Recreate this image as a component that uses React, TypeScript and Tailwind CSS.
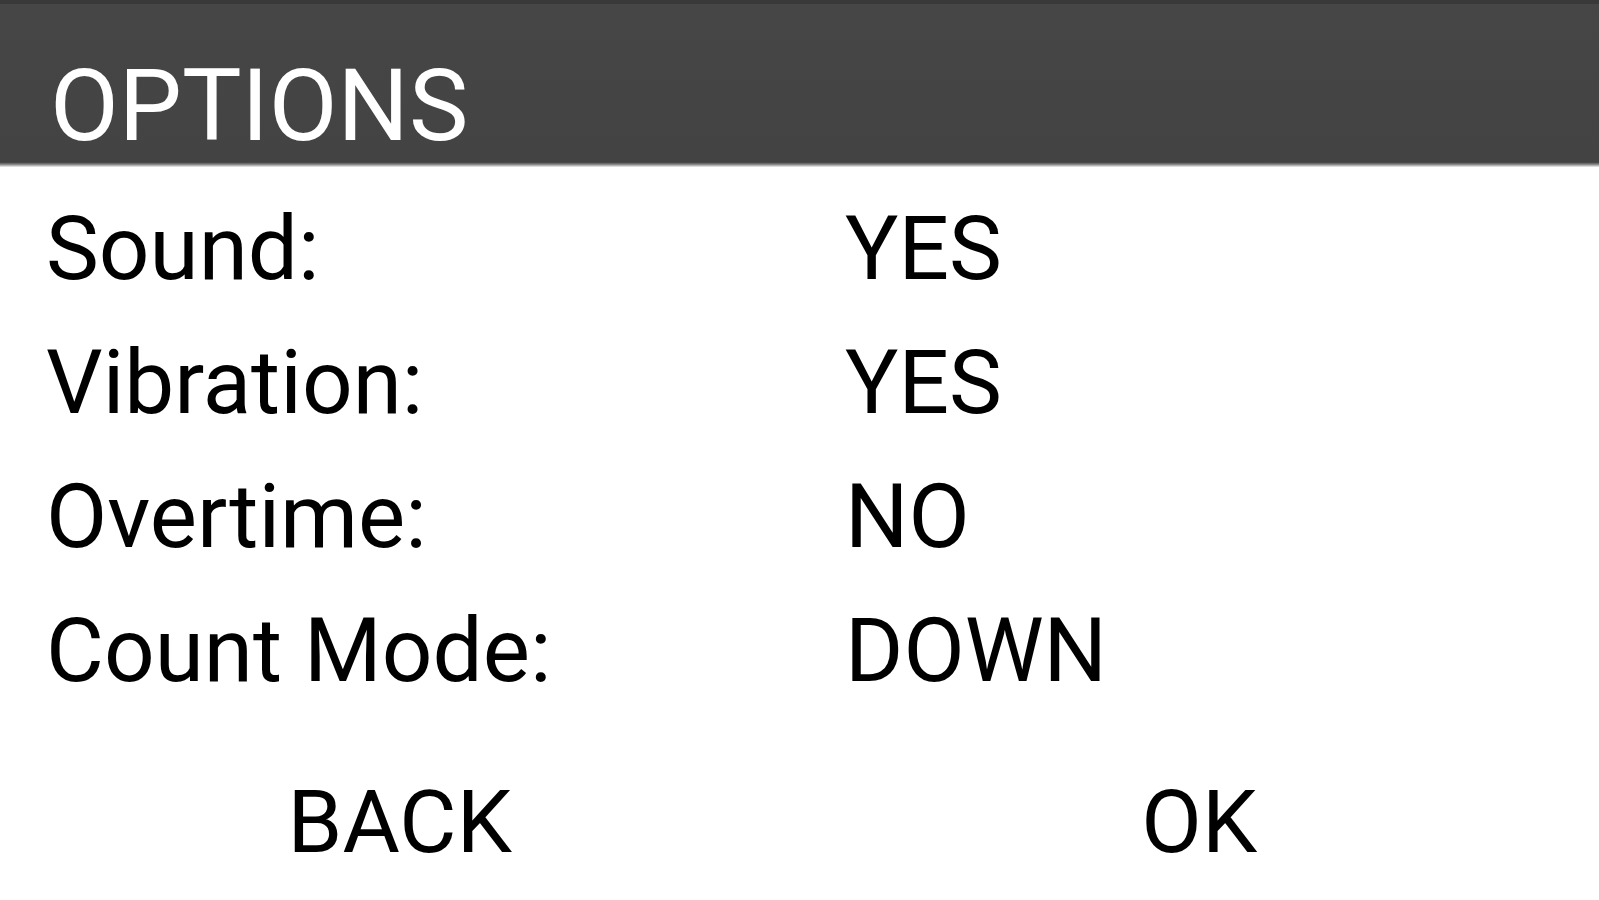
const options = [
  { label: 'Sound:', value: 'YES' },
  { label: 'Vibration:', value: 'YES' },
  { label: 'Overtime:', value: 'NO' },
  { label: 'Count Mode:', value: 'DOWN' },
]

export default function App() {
  return (
    <div className="w-[1599px] h-[900px] overflow-hidden bg-white font-['Roboto',_'Liberation_Sans',_sans-serif] text-black">
      {/* status strip */}
      <div className="h-[4px] bg-[#393939]" />

      {/* title bar */}
      <div className="h-[158px] bg-gradient-to-b from-[#464646] to-[#434343] pl-[50px] pt-[52px] text-[100px] leading-none text-white">
        OPTIONS
      </div>
      <div className="h-[5px] bg-gradient-to-b from-[#3c3c3c] via-[#8a8a8a] to-[#f2f2f2]" />

      {/* settings rows */}
      <div className="pt-[15px] pl-[46px]">
        {options.map((opt) => (
          <div key={opt.label} className="grid grid-cols-[799px_1fr] text-[89px] leading-[134px]">
            <span>{opt.label}</span>
            <span>{opt.value}</span>
          </div>
        ))}
      </div>

      {/* buttons */}
      <div className="mt-[60px] flex">
        <button type="button" className="flex-1 text-center text-[88px] leading-none">
          BACK
        </button>
        <button type="button" className="flex-1 text-center text-[88px] leading-none">
          OK
        </button>
      </div>
    </div>
  )
}
